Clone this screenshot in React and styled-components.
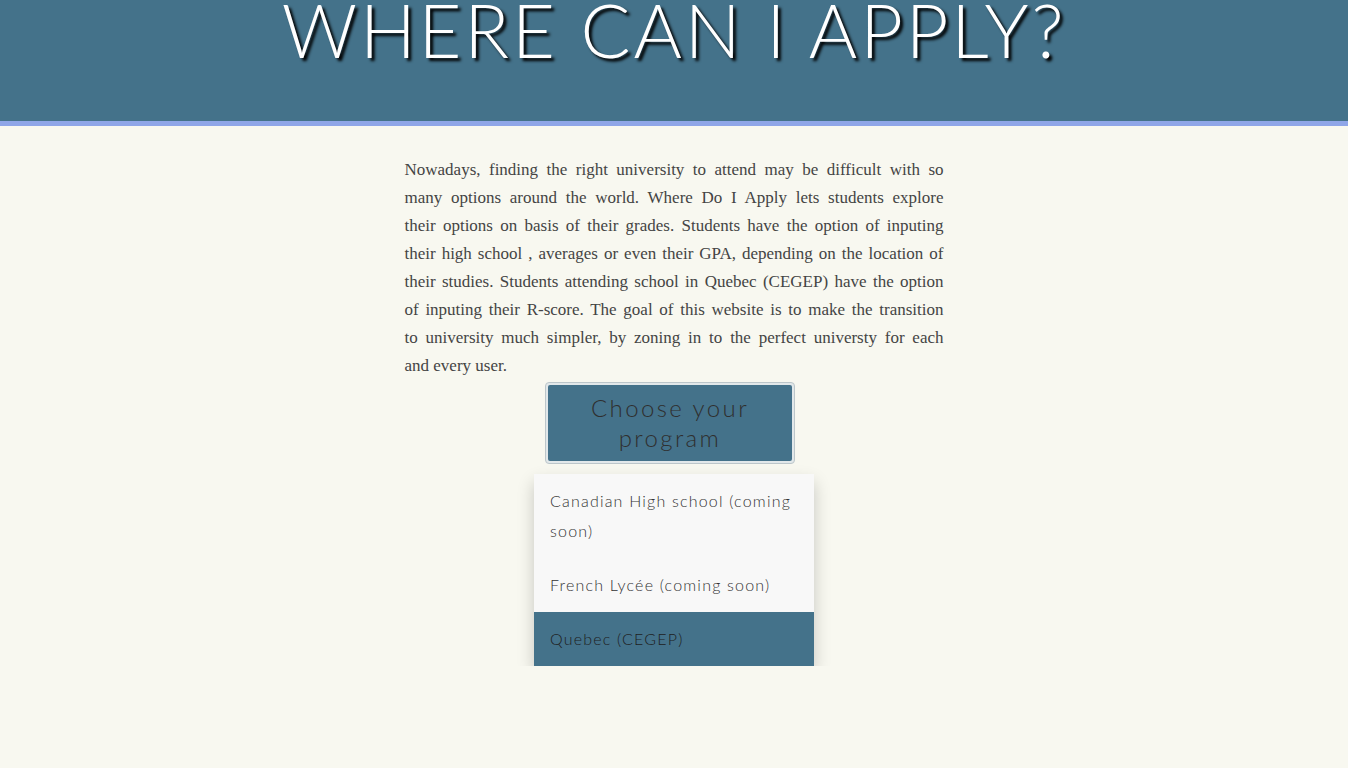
import React from 'react';
import styled, { createGlobalStyle } from 'styled-components';

const GlobalStyle = createGlobalStyle`
  html, body {
    margin: 0;
    padding: 0;
    background: #f8f8f0;
  }
  body {
    font-family: "Lato", "DejaVu Sans", sans-serif;
  }
`;

const Page = styled.div`
  min-height: 768px;
  background: #f8f8f0;
`;

const Header = styled.header`
  height: 121px;
  background: #44728a;
  border-bottom: 5px solid #8fa6e8;
  display: flex;
  justify-content: center;
  align-items: flex-start;
`;

const Title = styled.h1`
  margin: 0;
  font-family: "Lato", sans-serif;
  font-weight: 300;
  font-size: 74px;
  line-height: 60px;
  letter-spacing: 2.8px;
  color: #fff;
  text-shadow: 3px 3px 3px #000;
`;

const Main = styled.main`
  display: flex;
  flex-direction: column;
  align-items: center;
  padding-top: 30px;
`;

const Intro = styled.p`
  width: 539px;
  margin: 0;
  font-family: "Liberation Serif", "Times New Roman", serif;
  font-size: 17px;
  line-height: 28px;
  color: #444;
  text-align: justify;
`;

const Line = styled.span`
  display: block;
  text-align: ${p => (p.$last ? 'left' : 'justify')};
  text-align-last: ${p => (p.$last ? 'left' : 'justify')};
`;

const ProgramButton = styled.button`
  margin: 2px 8px 0 0;
  width: 250px;
  padding: 2px;
  border: 1px solid #bcc6ca;
  border-radius: 4px;
  background: #e2e8ea;
  cursor: pointer;
`;

const ButtonFace = styled.span`
  display: block;
  background: #44728a;
  border-radius: 2px;
  padding: 8px 10px;
  font-family: "Lato", sans-serif;
  font-weight: 300;
  font-size: 24px;
  line-height: 30px;
  letter-spacing: 2.4px;
  color: #2f2f2f;
`;

const Menu = styled.ul`
  list-style: none;
  margin: 10px 0 0;
  padding: 0;
  width: 280px;
  background: #f8f8f8;
  box-shadow: 0 8px 16px rgba(0, 0, 0, 0.2);
  clip-path: inset(-24px -24px 0 -24px);
`;

const MenuItem = styled.li`
  padding: 12px 14px 12px 16px;
  font-family: "Lato", sans-serif;
  font-weight: 300;
  font-size: 16px;
  line-height: 30px;
  letter-spacing: 1.2px;
  color: ${p => (p.$active ? '#1e1e1e' : '#333')};
  background: ${p => (p.$active ? '#44728a' : 'transparent')};
`;

const introLines = [
  'Nowadays, finding the right university to attend may be difficult with so',
  'many options around the world. Where Do I Apply lets students explore',
  'their options on basis of their grades. Students have the option of inputing',
  'their high school , averages or even their GPA, depending on the location of',
  'their studies. Students attending school in Quebec (CEGEP) have the option',
  'of inputing their R-score. The goal of this website is to make the transition',
  'to university much simpler, by zoning in to the perfect universty for each',
  'and every user.',
];

const programs = [
  { label: 'Canadian High school (coming soon)' },
  { label: 'French Lycée (coming soon)' },
  { label: 'Quebec (CEGEP)', active: true },
];

export default function App() {
  return (
    <Page>
      <GlobalStyle />
      <Header>
        <Title>WHERE CAN I APPLY?</Title>
      </Header>
      <Main>
        <Intro>
          {introLines.map((line, i) => (
            <Line key={i} $last={i === introLines.length - 1}>{line}</Line>
          ))}
        </Intro>
        <ProgramButton>
          <ButtonFace>Choose your program</ButtonFace>
        </ProgramButton>
        <Menu>
          {programs.map(p => (
            <MenuItem key={p.label} $active={p.active}>{p.label}</MenuItem>
          ))}
        </Menu>
      </Main>
    </Page>
  );
}
